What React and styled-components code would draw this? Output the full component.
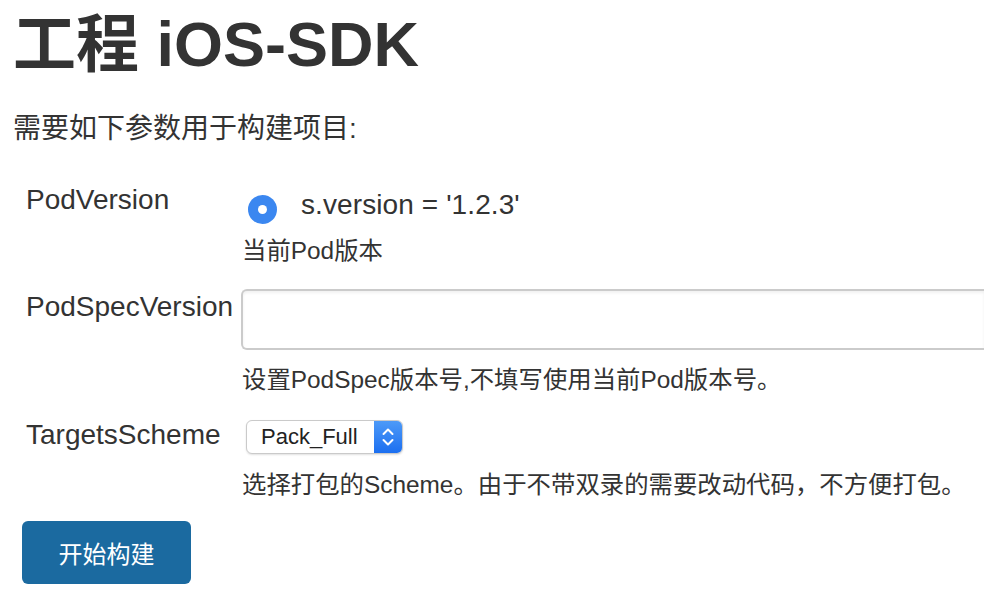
import React from 'react';
import styled, { createGlobalStyle } from 'styled-components';

const GlobalStyle = createGlobalStyle`
  html, body {
    margin: 0;
    padding: 0;
    background: #fff;
    overflow: hidden;
  }
  body {
    font-family: "Liberation Sans", "Noto Sans CJK SC", sans-serif;
    color: #333;
  }
`;

const Page = styled.div`
  padding-left: 13px;
  overflow: hidden;
`;

const Title = styled.h1`
  margin: 8px 0 0 0;
  font-size: 63px;
  line-height: 72px;
  font-weight: 700;
  color: #333;
`;

const Intro = styled.p`
  margin: 32px 0 0;
  font-size: 28px;
  line-height: 34px;
`;

const Field = styled.div`
  display: flex;
  margin-top: ${(p) => p.$gap}px;
`;

const Label = styled.div`
  width: 215px;
  padding-left: 13px;
  padding-top: ${(p) => p.$offset || 0}px;
  font-size: 28px;
  line-height: 34px;
  white-space: nowrap;
`;

const Value = styled.div`
  flex: 1;
  min-width: 0;
  display: flex;
  flex-direction: column;
  align-items: flex-start;
  padding-top: ${(p) => p.$offset || 0}px;
`;

const RadioLine = styled.label`
  display: flex;
  align-items: flex-start;
  font-size: 28px;
  line-height: 34px;
  letter-spacing: 0.1px;
`;

const RadioDot = styled.span`
  width: 29px;
  height: 29px;
  margin: 7px 24px 0 7px;
  border-radius: 50%;
  background: #3b87f0;
  display: flex;
  align-items: center;
  justify-content: center;
  &::after {
    content: '';
    width: 9px;
    height: 9px;
    border-radius: 50%;
    background: #fff;
  }
`;

const Description = styled.div`
  margin-top: ${(p) => p.$gap}px;
  margin-left: 1px;
  font-size: 24.4px;
  line-height: 28.8px;
  white-space: nowrap;
`;

const TextInput = styled.input`
  box-sizing: border-box;
  width: 100%;
  height: 61px;
  border: 2px solid #cbcbcb;
  border-right: none;
  border-radius: 6px 0 0 6px;
  box-shadow: inset 0 2px 3px rgba(0, 0, 0, 0.06);
  background: #fff;
  outline: none;
  font-family: inherit;
  font-size: 24px;
  padding: 0 12px;
`;

const Select = styled.div`
  box-sizing: border-box;
  margin: 2px 0 0 5px;
  width: 157px;
  height: 34px;
  display: flex;
  align-items: stretch;
  border: 1px solid #cacaca;
  border-radius: 6px;
  box-shadow: 0 1px 2px rgba(0, 0, 0, 0.12);
  background: #fff;
  overflow: hidden;
`;

const SelectText = styled.span`
  flex: 1;
  padding-left: 14px;
  font-size: 22px;
  line-height: 32px;
  color: #222;
`;

const SelectArrow = styled.span`
  width: 28px;
  display: flex;
  align-items: center;
  justify-content: center;
  background: linear-gradient(#4d9af8, #1c6ff0);
`;

const Submit = styled.button`
  margin: 22px 0 0 9px;
  width: 169px;
  height: 63px;
  border: none;
  border-radius: 6px;
  background: #1b6aa0;
  color: #fff;
  font-family: "Liberation Sans", "Noto Sans CJK SC", sans-serif;
  font-size: 24px;
  cursor: pointer;
`;

function Chevrons() {
  return (
    <svg width="14" height="22" viewBox="0 0 14 22" fill="none">
      <path d="M2.5 8 L7 3.5 L11.5 8" stroke="#fff" strokeWidth="2" strokeLinecap="round" strokeLinejoin="round" />
      <path d="M2.5 14 L7 18.5 L11.5 14" stroke="#fff" strokeWidth="2" strokeLinecap="round" strokeLinejoin="round" />
    </svg>
  );
}

export default function App() {
  return (
    <Page>
      <GlobalStyle />
      <Title>工程 iOS-SDK</Title>
      <Intro>需要如下参数用于构建项目:</Intro>

      <Field $gap={37}>
        <Label>PodVersion</Label>
        <Value $offset={5}>
          <RadioLine>
            <RadioDot />
            s.version = '1.2.3'
          </RadioLine>
          <Description $gap={13}>当前Pod版本</Description>
        </Value>
      </Field>

      <Field $gap={23}>
        <Label $offset={1}>PodSpecVersion</Label>
        <Value>
          <TextInput type="text" />
          <Description $gap={16}>设置PodSpec版本号,不填写使用当前Pod版本号。</Description>
        </Value>
      </Field>

      <Field $gap={23}>
        <Label>TargetsScheme</Label>
        <Value>
          <Select>
            <SelectText>Pack_Full</SelectText>
            <SelectArrow>
              <Chevrons />
            </SelectArrow>
          </Select>
          <Description $gap={17}>选择打包的Scheme。由于不带双录的需要改动代码，不方便打包。</Description>
        </Value>
      </Field>

      <Submit type="button">开始构建</Submit>
    </Page>
  );
}
